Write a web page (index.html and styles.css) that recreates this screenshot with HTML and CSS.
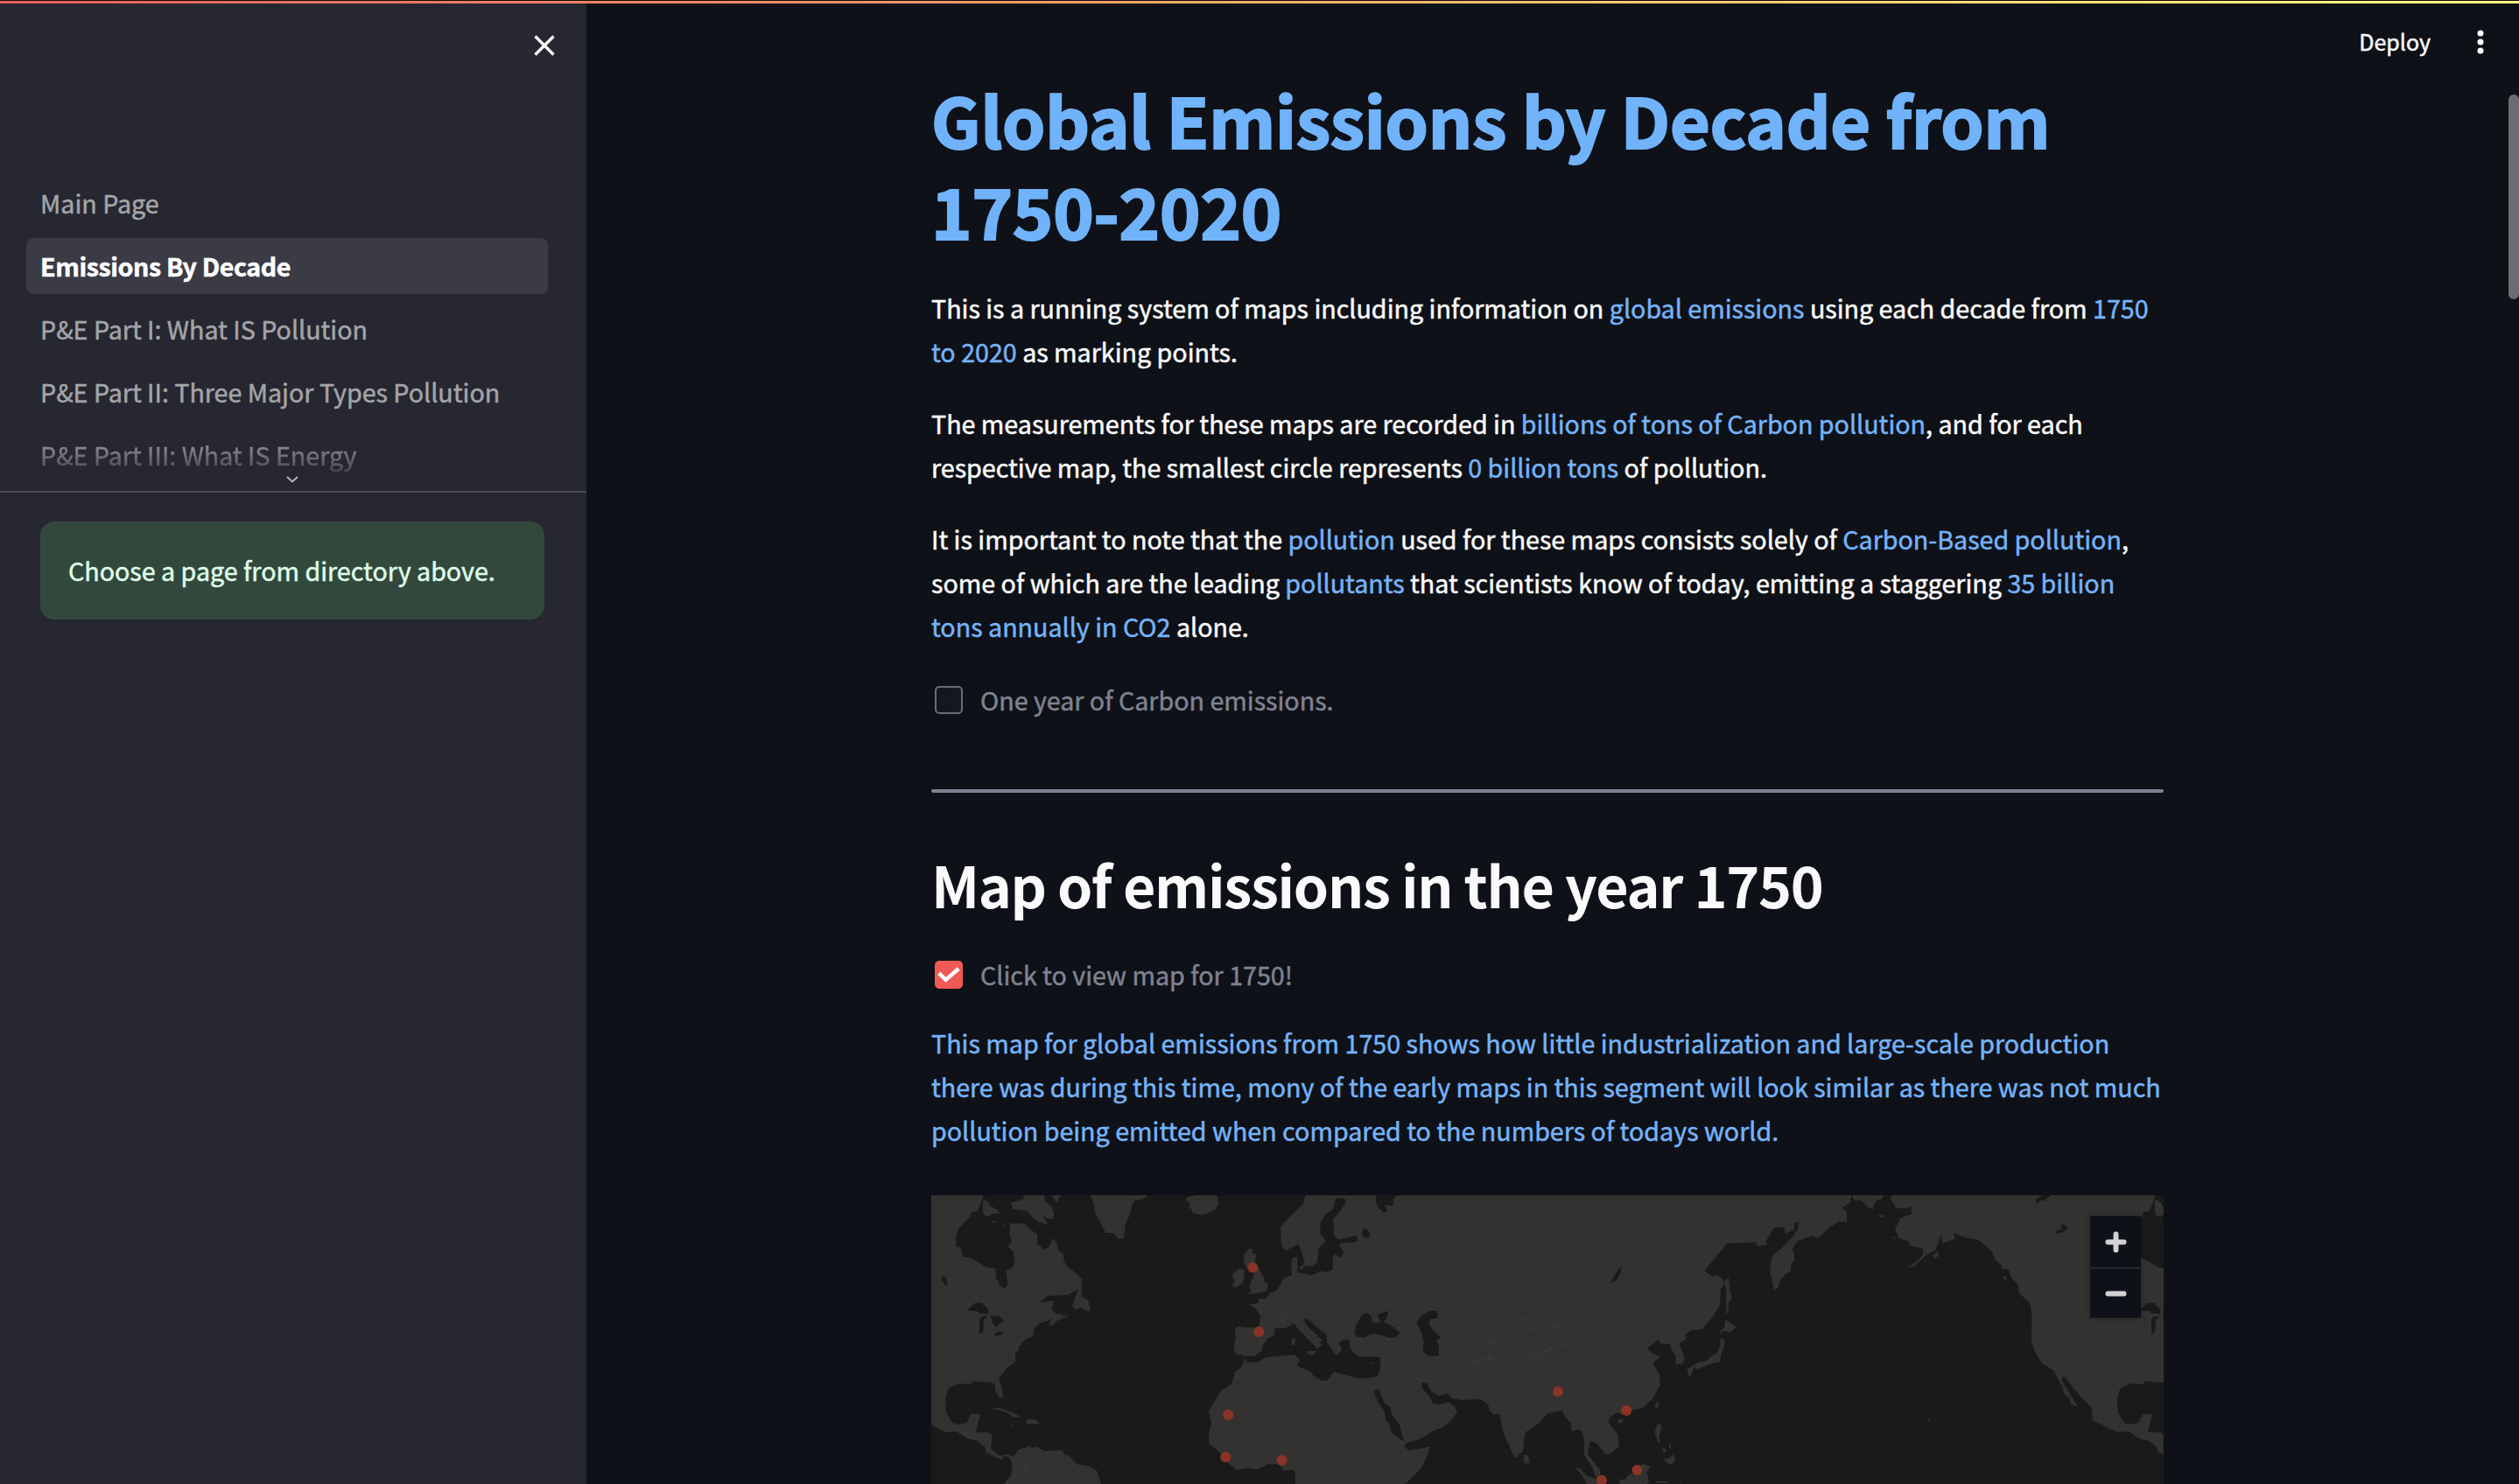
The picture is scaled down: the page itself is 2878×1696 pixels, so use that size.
FILE: index.html
```html
<!DOCTYPE html>
<html lang="en">
<head>
<meta charset="utf-8">
<title>Emissions By Decade</title>
<link rel="stylesheet" href="styles.css">
</head>
<body>
<div class="decoration"></div>
<div class="app">
  <aside class="sidebar">
    <div class="sidebar-head">
      <svg class="close" viewBox="0 0 24 24"><path d="M1.5 1.5L22.5 22.5M22.5 1.5L1.5 22.5"/></svg>
    </div>
    <nav class="nav">
      <a class="nav-item">Main Page</a>
      <a class="nav-item active">Emissions By Decade</a>
      <a class="nav-item">P&amp;E Part I: What IS Pollution</a>
      <a class="nav-item">P&amp;E Part II: Three Major Types Pollution</a>
      <a class="nav-item faded">P&amp;E Part III: What IS Energy</a>
      <svg class="chevron" viewBox="0 0 14 8"><path d="M1 1l6 5.5L13 1"/></svg>
    </nav>
    <div class="alert">Choose a page from directory above.</div>
  </aside>
  <main class="main">
    <header class="toolbar">
      <span class="deploy">Deploy</span>
      <svg class="kebab" viewBox="0 0 8 28"><circle cx="4" cy="4" r="3.5"/><circle cx="4" cy="14" r="3.5"/><circle cx="4" cy="24" r="3.5"/></svg>
    </header>
    <div class="scrollbar"></div>
    <div class="content">
      <h1>Global Emissions by Decade from<br>1750-2020</h1>
      <p>This is a running system of maps including information on <b>global emissions</b> using each decade from <b>1750<br>to 2020</b> as marking points.</p>
      <p>The measurements for these maps are recorded in <b>billions of tons of Carbon pollution</b>, and for each<br>respective map, the smallest circle represents <b>0 billion tons</b> of pollution.</p>
      <p>It is important to note that the <b>pollution</b> used for these maps consists solely of <b>Carbon-Based pollution</b>,<br>some of which are the leading <b>pollutants</b> that scientists know of today, emitting a staggering <b>35 billion<br>tons annually in CO2</b> alone.</p>
      <label class="check"><span class="box"></span>One year of Carbon emissions.</label>
      <hr>
      <h2>Map of emissions in the year 1750</h2>
      <label class="check"><span class="box checked"><svg viewBox="0 0 26 18"><path d="M1.8 7.2L9.6 14.8L24.2 2"/></svg></span>Click to view map for 1750!</label>
      <p class="caption"><b>This map for global emissions from 1750 shows how little industrialization and large-scale production<br>there was during this time, mony of the early maps in this segment will look similar as there was not much<br>pollution being emitted when compared to the numbers of todays world.</b></p>
      <div class="map">
        <svg class="world" viewBox="42 48 4224 990">
          <defs>
            <g id="namerica">
              <path class="land" d="M30,48 220,48 212,75 200,103 180,105 175,122 155,140 135,165 126,190 126,222 142,228 152,260 175,262 230,295 262,300 264,335 276,345 272,352 292,370 304,355 298,305 320,296 329,275 322,240 305,225 317,205 311,185 312,145 345,145 365,147 380,165 405,180 405,215 430,235 445,225 460,195 470,210 480,240 495,250 497,275 512,297 540,315 558,335 557,395 580,407 588,446 565,440 555,433 540,440 525,430 545,370 510,390 440,393 415,416 460,408 455,440 470,455 490,455 495,465 510,455 508,465 470,480 455,497 447,488 455,473 415,487 393,508 392,530 360,545 342,570 341,582 331,585 330,620 300,642 273,675 287,715 287,745 275,742 262,720 260,700 248,690 205,687 187,685 175,697 135,693 100,710 90,745 92,790 105,815 118,830 135,833 163,828 178,798 210,798 195,860 238,861 250,870 247,917 262,930 280,942 300,935 325,943 340,920 370,912 382,905 385,915 405,911 430,925 490,922 500,937 515,942 540,970 585,977 608,990 625,1038 290,1038 310,1015 320,995 318,965 308,945 290,943 285,957 230,930 225,912 200,890 165,882 130,858 90,860 42,835 30,828Z
                M220,60 240,75 245,85 265,95 280,112 255,110 235,122 222,115 218,100Z
                M315,75 330,68 358,62 358,48 430,48 430,70 455,85 462,110 460,130 440,128 425,120 443,150 415,140 390,125 370,102 320,95Z
                M455,48H486L472,75Z M250,138l15,-4 -4,6 -8,6z M290,148l7,2 -2,8z
                M247,782 275,776 300,785 325,795 348,808 325,810 305,795 280,785Z M368,817 395,816 413,828 405,833 370,832Z M316,834h8v3h-8z M438,831h6v3h-6z"/>
              <path class="sea" d="M78,327 90,327 99,358 88,355 78,340Z M165,443 192,418 215,417 237,438 237,455 205,452 200,445Z M207,525 207,475 215,464 235,463 222,475 220,515Z M245,460 275,462 292,480 275,487 267,502 252,487Z M258,522 275,515 293,515 280,527 260,531Z"/>
            </g>
          </defs>
          <rect class="sea" x="42" y="48" width="4224" height="990"/>
          <use href="#namerica"/>
          <use href="#namerica" x="4017"/>
          <g>
            <path class="land" d="M587,48 785,48 770,60 740,65 728,85 725,110 708,145 702,196 685,198 665,177 640,177 605,110 598,75Z M920,55 935,52 945,48 1020,48 1028,75 1015,98 970,117 938,108 935,95 925,92 930,75 915,66Z
              M1325,48 1315,80 1280,112 1240,155 1240,205 1250,235 1262,240 1280,262 1276,285 1278,322 1250,332 1240,350 1225,375 1200,385 1190,405 1165,402 1163,417 1132,422 1155,437 1170,460 1165,500 1120,502 1095,498 1083,507 1085,540 1078,570 1085,592 1115,598 1113,620 1103,640 1082,655 1072,695 1035,718 1015,750 993,788 1002,830 992,870 995,900 1030,930 1050,960 1090,990 1125,983 1160,988 1195,970 1235,970 1250,992 1285,990 1290,1005 1290,1038H1354V48Z
              M1115,250 1130,232 1143,232 1142,248 1157,250 1150,280 1165,300 1185,335 1183,345 1197,350 1190,378 1130,388 1140,372 1133,370 1137,345 1145,330 1150,310 1125,300 1113,280Z
              M1073,320 1095,300 1117,302 1112,345 1092,362 1072,362 1082,345Z"/>
            <path class="ridge" d="M1247,483l6,-14 M1253,470l12,-8 M1266,462l6,-12 10,-3 M1290,446h8 M1088,672l12,-4 10,-8 8,-2 M315,1030l20,-30 M345,990l22,-22 M355,1000l20,-20 M380,950l22,-16 M155,864h24 M300,1036l14,-14"/>
          </g>
          <g transform="translate(1350)">
            <path class="land" d="M-4,48V1038H315L345,1012 370,985 390,945 402,910 330,923 312,908 320,898 365,885 420,852 440,847 475,820 495,790 485,770 460,755 470,743 510,750 575,747 600,765 605,785 620,800 640,797 652,860 690,945 697,947 720,925 727,862 780,825 803,797 855,785 860,800 885,830 887,858 905,852 920,855 930,885 930,940 955,975 970,1015 985,1022 985,990 960,960 942,935 950,890 975,900 1005,938 1020,935 1050,908 1047,870 1015,830 1015,810 1045,793 1060,800 1070,790 1130,778 1165,745 1190,700 1187,660 1165,625 1192,600 1165,590 1145,573 1185,542 1192,557 1225,558 1230,580 1243,595 1243,627 1265,627 1275,610 1255,555 1280,540 1278,525 1295,512 1335,507 1370,465 1395,425 1398,370 1407,360 1405,335 1385,320 1370,327 1342,307 1420,213 1504,210V48Z"/>
            <path class="sea" d="M-100,240 -88,240 -70,264 -53,257 -52,312 -5,322 30,308 50,312 68,303 68,265 75,250 96,262 105,245 98,228 90,225 95,212 140,209 155,203 150,187 85,200 72,185 70,130 95,100 113,75 110,60 80,57 66,100 45,112 25,145 25,180 45,205 20,230 15,278 0,290 -40,292 -28,280 -40,240 -50,215 -65,225Z
              M170,165 182,162 197,180 190,195 175,193 168,180Z M216,48H288L275,62 275,85 245,82 255,100 245,107 225,92 216,75Z
              M145,500 165,462 182,450 200,463 202,480 215,487 235,480 222,465 225,455 260,445 250,475 240,480 270,495 297,518 293,535 265,537 215,523 190,527 180,535 150,533 142,520Z
              M400,445H425L428,470 405,472 397,487 410,510 425,522 440,537 422,545 432,567 432,598 400,600 378,585 380,545 370,515 355,485 370,462Z
              M-240,600 -200,600 -175,580 -170,560 -155,540 -132,528 -130,503 -95,505 -65,487 -50,507 -5,555 10,567 15,578 5,592 17,572 32,560 20,550 35,548 -5,510 -25,490 -30,468 -5,482 25,510 45,522 50,555 80,598 90,590 100,578 88,552 110,542 125,545 127,570 140,590 160,603 180,600 232,603 230,640 222,668 205,672 160,677 70,653 50,683 30,683 0,665 -5,655 -55,632 -45,612 -60,595 -160,603 -190,620 -225,620Z
              M208,720 225,714 245,760 265,775 270,800 295,830 312,890 300,885 270,860 262,830 250,820 245,790 228,765Z
              M372,690 390,692 405,720 430,735 462,728 478,747 463,757 435,765 410,763 405,745 375,710Z M1055,293 1057,305 1045,335 1020,350 1035,320Z"/>
            <path class="land" d="M-23,583 15,582 -3,597 -22,589Z M-72,538 -61,540 -62,560 -71,564Z M-68,515 -64,517 -66,532Z M194,621 205,621 199,628Z M-48,293 -30,290 -34,303 -47,300Z
              M725,938 737,940 743,965 728,970 722,955Z M1045,820 1062,813 1064,825 1050,831Z M1185,752 1187,770 1175,782 1173,765Z
              M1180,833 1193,833 1195,850 1187,870 1190,893 1182,893 1171,860Z M1197,915l14,4 -3,12 -10,-4z M1222,900l7,5 -3,12 -5,-5z M1203,950 1220,950 1236,935 1242,955 1230,973 1215,967Z
              M1050,1023 1070,1022 1085,1005 1110,1000 1130,968 1158,978 1145,995 1152,1030 1145,1038 1052,1038Z M897,982 915,985 940,1010 970,1020 978,1038 940,1038 920,1005Z M1177,1029h40v5h-40z M1258,1028h5v7h-5z
              M1407,345 1425,330 1430,375 1437,403 1425,415 1424,452 1417,452 1416,370Z M1413,475 1452,500 1430,518 1408,513 1398,525 1396,512 1412,500Z
              M1397,540 1410,540 1412,560 1400,590 1395,620 1365,625 1330,640 1315,645 1307,635 1302,648 1300,660 1290,672 1282,645 1300,632 1320,622 1350,615 1365,600 1385,590 1395,565Z"/>
            <path class="ridge" d="M710,478l28,-10 M755,462h8 M695,522l25,-8 30,-6 14,-8 M615,518v14 M580,570l20,-12 30,-8 22,-2 M545,618l30,-6 28,-8 20,4 M600,610l18,-14 M738,607l30,-8 25,-15 25,-12 25,-8 M850,562l30,-3 30,-6 M815,500l30,-2 M860,373h10 M1000,370h14 M890,464h12 M780,440h8 M1043,638l18,-6 M918,765l4,-22 10,-8 M880,745l14,-12 M690,600l10,2 M290,502h16 M340,510h14 M250,543l28,-3 16,-12 M428,605l20,-8 M650,620l14,-4 M775,408h8"/>
            <path class="ridge faint" d="M680,650Q740,710 810,720 M865,720l30,-20 M970,695l25,-30 M228,668v30 M240,905v20 M262,970l25,-30 80,-12 M907,790v25 M760,505l20,-10"/>
          </g>
          <g transform="translate(2850)">
            <path class="land" d="M-4,48V210L0,207 20,210 22,222 58,218 53,205 80,160 115,157 120,180 150,165 150,145 165,138 162,165 140,195 105,232 85,245 70,270 67,310 80,373 95,365 100,340 120,317 137,310 140,280 150,275 150,245 142,235 160,205 210,187 232,195 270,158 305,138 330,140 330,105 312,90 340,75 347,48 356,65 380,67 405,92 420,93 428,68 450,60 455,48Z
              M485,48 478,62 490,75 498,92 540,92 550,85 552,112 515,125 495,165 510,195 540,205 548,222 590,230 592,250 575,270 550,290 533,297 560,292 600,255 635,235 652,183 658,212 700,198 697,177 735,193 780,200 825,237 840,270 858,285 862,300 885,303 895,332 915,352 922,385 958,418 965,460 962,550 975,585 1000,625 1038,648 1060,690 1072,710 1072,725 1093,745 1100,765 1122,773 1095,730 1068,685 1068,670 1080,673 1110,715 1168,775 1173,820 1258,860 1290,850 1215,830 1215,48Z
              M435,115 455,117 458,124 440,121Z M486,192h10v4h-10z M625,258 635,245 645,240 643,257 632,264Z M865,324 875,324 876,337 869,338Z M609,813h6v9h-6z M513,305l8,2 -5,3z"/>
            <path class="sea" d="M978,62 1000,48H1032L1010,62 1010,68 995,65 980,78Z M1048,170 1065,165 1067,145 1090,160 1070,175 1050,180Z"/>
            <path class="ridge" d="M652,132l16,-9 M696,160l10,4 M736,142l3,8 M762,164h6 M987,411h8 M1166,645v10"/>
          </g>
          <g class="points">
            <circle cx="1144" cy="296" r="18"/><circle cx="1165" cy="516" r="18"/><circle cx="1060" cy="801" r="18"/><circle cx="1051" cy="946" r="18"/><circle cx="1244" cy="957" r="18"/>
            <circle cx="2190" cy="721" r="18"/><circle cx="2425" cy="786" r="18"/><circle cx="2461" cy="990" r="18"/><circle cx="2340" cy="1025" r="18"/>
          </g>
        </svg>
        <div class="zoom-controls">
          <div class="zoom-btn"><svg viewBox="0 0 24 24"><path d="M12 5V19M5 12H19"/></svg></div>
          <div class="zoom-btn"><svg viewBox="0 0 24 24"><path d="M5 12H19"/></svg></div>
        </div>
      </div>
    </div>
  </main>
</div>
</body>
</html>
```
FILE: styles.css
```css
* { box-sizing: border-box; }
body {
  margin: 0;
  height: 1696px;
  overflow: hidden;
  background: #0e1117;
  color: #fafafa;
  font-family: "Noto Sans CJK SC", "Noto Sans CJK JP", sans-serif;
  font-size: 28.65px;
  line-height: 50px;
  -webkit-text-stroke-width: 0.5px;
}
.decoration {
  position: absolute;
  z-index: 5;
  top: 0;
  left: 0;
  width: 100%;
  height: 4px;
  border-top: 1px solid #17080a;
  background: linear-gradient(90deg, #e8605a, #fffd80);
}
.app { display: flex; height: 1696px; }
.sidebar { width: 670px; flex: none; background: #262730; }
.sidebar-head { height: 200px; padding: 40px 36px 0 0; display: flex; justify-content: flex-end; align-items: flex-start; }
.close { width: 24px; height: 24px; fill: none; stroke: #fafafa; stroke-width: 3.4; }
.nav { position: relative; height: 363px; border-bottom: 2px solid #4a4b54; padding: 0 44px 0 30px; }
.nav-item {
  display: block;
  height: 64px;
  margin-bottom: 8px;
  padding-left: 16px;
  line-height: 64px;
  color: #a3a4a8;
  white-space: nowrap;
  border-radius: 8px;
}
.nav-item.active { background: #3b3b45; color: #fff; font-weight: 700; letter-spacing: -0.4px; }
.nav-item.faded {
  color: transparent;
  background: linear-gradient(#a3a4a8 15%, #40414a 85%);
  background-clip: text;
  -webkit-background-clip: text;
}
.chevron { position: absolute; left: 327px; bottom: 9px; width: 14px; height: 8px; fill: none; stroke: #b5b6ba; stroke-width: 2; }
.alert {
  margin: 33px 48px 0 46px;
  height: 112px;
  padding-left: 32px;
  border-radius: 16px;
  background: #33483d;
  color: #dffde9;
  line-height: 111px;
}
.main { position: relative; flex: 1; }
.toolbar { display: flex; justify-content: flex-end; align-items: center; height: 96px; padding-right: 40px; gap: 53px; }
.deploy { margin-top: -2px; font-size: 25px; }
.kebab { width: 8px; height: 28px; fill: #fafafa; }
.scrollbar { position: absolute; right: 0; top: 108px; width: 12px; height: 234px; border-radius: 6px; background: #6b6c70; }
.content { width: 1408px; margin-left: 394px; white-space: nowrap; }
h1 {
  margin: -12px 0 35px;
  font-size: 78.8px;
  font-weight: 700;
  line-height: 104px;
  letter-spacing: -0.1px;
  color: #70b3fb;
  -webkit-text-stroke-width: 2.2px;
}
h2 { margin: 0; font-size: 64.5px; font-weight: 600; line-height: 84px; letter-spacing: -1.3px; -webkit-text-stroke-width: 0; }
p { margin: 0 0 32px; }
b { color: #75b3f8; font-weight: 400; }
.check { display: flex; align-items: center; gap: 20px; height: 50px; margin-top: 34px; padding-left: 4px; color: #808290; }
.box { width: 32px; height: 32px; border: 2px solid #6a6b73; border-radius: 5px; background: #131720; }
.box.checked { border: 0; background: #f05a56; display: grid; place-items: center; }
.box svg { width: 26px; height: 18px; fill: none; stroke: #fff; stroke-width: 4.4; }
hr { height: 4px; margin: 77px 0 62px; border: 0; border-radius: 2px; background: #808290; }
h2 + .check { margin: 37px 0 28px; }
.caption { margin-bottom: 49px; }
.map { position: relative; width: 1408px; height: 330px; overflow: hidden; }
.world { display: block; width: 1408px; height: 330px; }
.land { fill: #343230; }
.sea { fill: #1a1a1a; }
.ridge { fill: none; stroke: #3d3c3a; stroke-width: 4; stroke-dasharray: 14 5; }
.faint { stroke: #373533; }
.points { fill: #8a3427; }
.zoom-controls { position: absolute; top: 24px; left: 1324px; width: 58px; box-shadow: 0 0 6px rgba(0, 0, 0, .35); }
.zoom-btn { display: grid; place-items: center; height: 56px; background: #0e1117; }
.zoom-btn:first-child { height: 60px; border-bottom: 2px solid #26272f; }
.zoom-btn svg { width: 31px; height: 31px; fill: none; stroke: #d2d2d3; stroke-width: 4.6; stroke-linecap: round; }
```
